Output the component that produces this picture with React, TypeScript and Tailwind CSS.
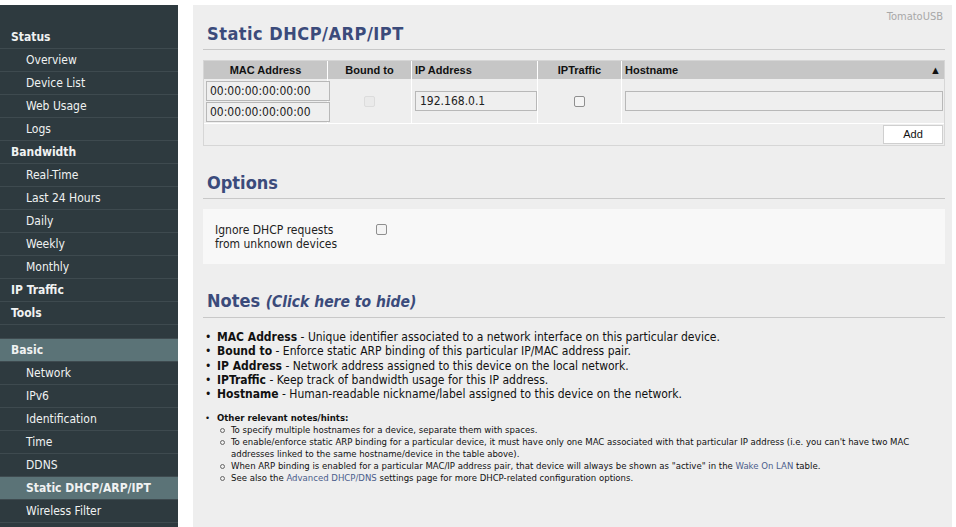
import React from "react";

type NavItem = { label: string; header?: boolean; active?: boolean; gap?: boolean };

const nav: NavItem[] = [
  { label: "Status", header: true },
  { label: "Overview" },
  { label: "Device List" },
  { label: "Web Usage" },
  { label: "Logs" },
  { label: "Bandwidth", header: true },
  { label: "Real-Time" },
  { label: "Last 24 Hours" },
  { label: "Daily" },
  { label: "Weekly" },
  { label: "Monthly" },
  { label: "IP Traffic", header: true },
  { label: "Tools", header: true },
  { label: "Basic", header: true, active: true, gap: true },
  { label: "Network" },
  { label: "IPv6" },
  { label: "Identification" },
  { label: "Time" },
  { label: "DDNS" },
  { label: "Static DHCP/ARP/IPT", active: true },
  { label: "Wireless Filter" },
];

const tahoma = "font-['DejaVu_Sans_Condensed','DejaVu_Sans',sans-serif]";
const arial = "font-['Liberation_Sans',Arial,sans-serif]";

const Checkbox = ({ disabled }: { disabled?: boolean }) => (
  <span
    className={
      "inline-block size-[11px] rounded-[2px] border " +
      (disabled ? "border-[#dcdcdc] bg-[#eaeaea]" : "border-[#8f8f8f] bg-[#f4f4f4]")
    }
  />
);

const Heading = ({ children }: { children: React.ReactNode }) => (
  <h2 className="border-b border-[#c8c8c8] px-[4px] pb-[4px] text-[18px] leading-[22px] font-bold text-[#3b4b7b]">
    {children}
  </h2>
);

const notes: [string, string][] = [
  ["MAC Address", "Unique identifier associated to a network interface on this particular device."],
  ["Bound to", "Enforce static ARP binding of this particular IP/MAC address pair."],
  ["IP Address", "Network address assigned to this device on the local network."],
  ["IPTraffic", "Keep track of bandwidth usage for this IP address."],
  ["Hostname", "Human-readable nickname/label assigned to this device on the network."],
];

export default function App() {
  return (
    <div className={`flex h-[527px] w-[956px] overflow-hidden bg-white ${tahoma}`}>
      {/* sidebar */}
      <div className="mt-[5px] w-[178px] shrink-0 bg-[#2e3a3f] pt-[21px]">
        {nav.map((n) => (
          <React.Fragment key={n.label}>
            {n.gap && <div className="h-[14px] border-b border-[#3e4a4f]" />}
            <div
              className={
                "flex h-[23px] items-center border-b border-[#3e4a4f] text-[12px] text-[#f0f2f2] " +
                (n.header || n.active ? "font-bold " : "") +
                (n.header ? "pl-[11px] " : "pl-[26px] ") +
                (n.active ? "bg-[#5b7377]" : "")
              }
            >
              {n.label}
            </div>
          </React.Fragment>
        ))}
      </div>

      {/* main */}
      <div className="mt-[5px] ml-[15px] w-[759px] shrink-0 bg-[#eeeeee] pr-[7px] pl-[10px]">
        <div className="pt-[6px] pr-[2px] text-right text-[11px] leading-[12px] text-[#a8a8a8]">TomatoUSB</div>
        <Heading>
          <span className="tracking-[0.5px]">Static DHCP/ARP/IPT</span>
        </Heading>

        {/* table */}
        <div className="mt-[10px] border border-[#d6d6d6]">
          <div className={`flex h-[18px] bg-[#c6c6c6] text-[11px] leading-[18px] font-bold text-[#111] ${arial}`}>
            <div className="w-[124px] border-r border-white text-center">MAC Address</div>
            <div className="w-[84px] border-r border-white text-center">Bound to</div>
            <div className="w-[126px] border-r border-white pl-[3px]">IP Address</div>
            <div className="w-[84px] border-r border-white text-center">IPTraffic</div>
            <div className="flex flex-1 justify-between px-[3px]">
              <span>Hostname</span>
              <span className="text-[11px]">▲</span>
            </div>
          </div>
          <div className="flex h-[45px] border-b border-white">
            <div className="flex w-[124px] flex-col gap-[1px] border-r border-white pt-[2px] pl-[2px]">
              {[0, 1].map((i) => (
                <div
                  key={i}
                  className="h-[20px] w-[124px] shrink-0 border border-[#b8b8b8] bg-[#efefef] pl-[3px] text-[12px] leading-[18px] text-[#222]"
                >
                  00:00:00:00:00:00
                </div>
              ))}
            </div>
            <div className="flex w-[84px] items-center justify-center border-r border-white pt-[1px]">
              <Checkbox disabled />
            </div>
            <div className="flex w-[126px] items-center border-r border-white pl-[3px]">
              <div className="h-[20px] w-[125px] border border-[#b8b8b8] bg-[#efefef] pl-[4px] text-[12px] leading-[18px] text-[#222]">
                192.168.0.1
              </div>
            </div>
            <div className="flex w-[84px] items-center justify-center border-r border-white pt-[1px]">
              <Checkbox />
            </div>
            <div className="flex flex-1 items-center pr-[1px] pl-[3px]">
              <div className="h-[20px] w-full border border-[#b8b8b8] bg-[#efefef]" />
            </div>
          </div>
          <div className="flex h-[21px] items-center justify-end pr-[1px]">
            <div className={`h-[19px] w-[60px] border border-[#cfcfcf] bg-white text-center text-[11px] leading-[17px] text-[#111] ${arial}`}>
              Add
            </div>
          </div>
        </div>

        {/* options */}
        <div className="mt-[26px]">
          <Heading>Options</Heading>
        </div>
        <div className="mt-[10px] flex h-[55px] items-center bg-[#f8f8f8] pl-[12px]">
          <div className="w-[161px] text-[12px] leading-[14px] text-[#222]">
            Ignore DHCP requests
            <br />
            from unknown devices
          </div>
          <div className="-mt-[14px]">
            <Checkbox />
          </div>
        </div>

        {/* notes */}
        <div className="mt-[26px]">
          <Heading>
            Notes <i className="text-[15.5px]">(Click here to hide)</i>
          </Heading>
        </div>
        <ul className="mt-[12px] text-[12px] leading-[14.3px] text-[#111]">
          {notes.map(([k, v]) => (
            <li key={k} className="flex">
              <span className="w-[14px] shrink-0 pl-[2px]">•</span>
              <span>
                <b>{k}</b> - {v}
              </span>
            </li>
          ))}
        </ul>
        <div className="mt-[11px] flex text-[9.5px] leading-[12px] text-[#111]">
          <span className="w-[14px] shrink-0 pl-[2px]">•</span>
          <div>
            <b>Other relevant notes/hints:</b>
            <ul className="pl-[3px]">
              {[
                <>To specify multiple hostnames for a device, separate them with spaces.</>,
                <>
                  To enable/enforce static ARP binding for a particular device, it must have only one MAC associated with that
                  particular IP address (i.e. you can't have two MAC addresses linked to the same hostname/device in the table above).
                </>,
                <>
                  When ARP binding is enabled for a particular MAC/IP address pair, that device will always be shown as "active" in
                  the <span className="text-[#4b5d8c]">Wake On LAN</span> table.
                </>,
                <>
                  See also the <span className="text-[#4b5d8c]">Advanced DHCP/DNS</span> settings page for more DHCP-related
                  configuration options.
                </>,
              ].map((c, i) => (
                <li key={i} className="flex">
                  <span className="w-[11px] shrink-0 pt-[4px]">
                    <span className="block size-[5px] rounded-full border border-[#666]" />
                  </span>
                  <span className="w-[700px]">{c}</span>
                </li>
              ))}
            </ul>
          </div>
        </div>
      </div>
    </div>
  );
}
